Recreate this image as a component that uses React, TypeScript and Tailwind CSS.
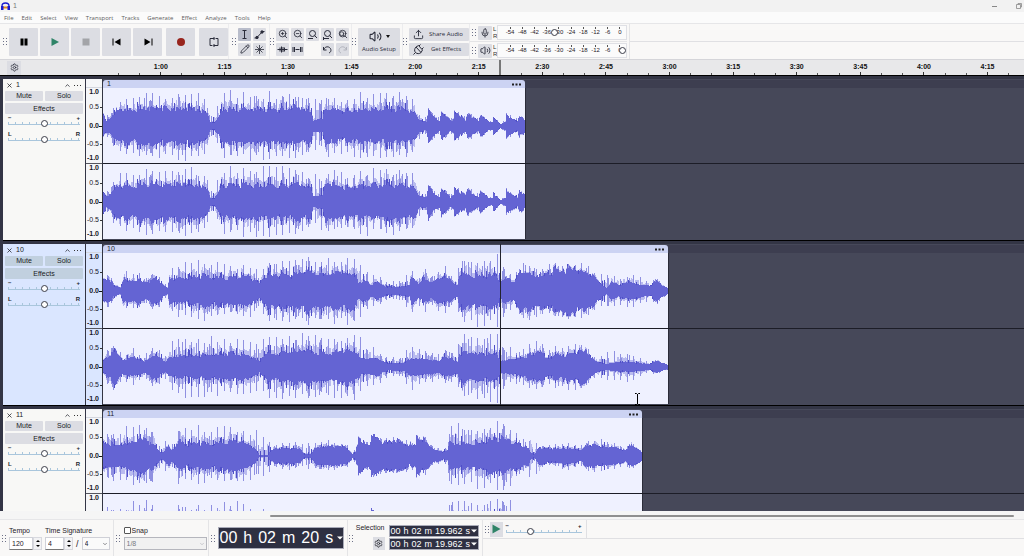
import type { ReactNode } from 'react';
import { ChevronDown, ChevronUp, Mic, Pencil, Search, Settings, Upload, Volume2, X, ZoomIn, ZoomOut } from 'lucide-react';

const PX_PER_SECOND = 4.24;
const RULER_LABELS = [
  '1:00', '1:15', '1:30', '1:45', '2:00', '2:15', '2:30', '2:45', '3:00', '3:15', '3:30', '3:45', '4:00', '4:15',
];
const MENUS = ['File', 'Edit', 'Select', 'View', 'Transport', 'Tracks', 'Generate', 'Effect', 'Analyze', 'Tools', 'Help'];
const DB_MARKS = ['-54', '-48', '-42', '-36', '-30', '-24', '-18', '-12', '-6', '0'];

// x, body height, peak height
type Key = [number, number, number];

interface Track {
  name: string;
  seconds: number;
  selected?: boolean;
  short?: boolean;
  channels: [Key[], Key[]];
}

const TRACK_1: Key[] = [
  [0, 11, 14], [3, 6, 10], [8, 9, 18], [11, 13, 26], [13, 18, 29], [30, 17, 31], [45, 20, 36], [62, 18, 32], [80, 19, 37],
  [98, 17, 33], [104, 13, 30], [107, 4, 10], [111, 4, 20], [115, 9, 24], [118, 18, 36], [150, 18, 37], [180, 17, 36],
  [196, 20, 34], [207, 15, 30], [210, 6, 30], [219, 7, 30], [222, 20, 34], [240, 16, 30], [260, 17, 36], [285, 18, 35],
  [300, 18, 34], [312, 14, 34], [316, 6, 14], [323, 5, 9], [325, 17, 18], [332, 8, 12], [336, 5, 8], [338, 14, 17],
  [347, 5, 8], [350, 6, 9], [351, 15, 18], [362, 6, 9], [364, 13, 16], [375, 5, 8], [377, 11, 13], [386, 4, 5],
  [389, 4, 5], [390, 9, 10], [397, 2, 3], [402, 4, 6], [403, 12, 14], [414, 5, 7], [416, 11, 13], [422, 6, 7],
];

const TRACK_2_LEFT: Key[] = [
  [0, 12, 15], [6, 13, 20], [10, 6, 9], [17, 3, 5], [20, 12, 22], [28, 11, 17], [34, 13, 20], [42, 8, 14], [50, 13, 20],
  [55, 13, 19], [60, 6, 9], [64, 3, 6], [66, 14, 24], [80, 13, 29], [100, 16, 32], [127, 14, 27], [145, 16, 32],
  [156, 8, 18], [163, 17, 33], [185, 17, 33], [205, 21, 36], [220, 18, 34], [240, 19, 36], [253, 18, 34], [255, 8, 34],
  [262, 11, 22], [268, 6, 14], [273, 9, 20], [282, 5, 10], [295, 4, 11], [306, 6, 20], [308, 15, 26], [315, 7, 14],
  [320, 13, 24], [328, 8, 17], [342, 15, 25], [350, 8, 14], [354, 6, 12], [356, 18, 37], [370, 17, 37], [385, 17, 37],
  [394, 17, 37], [397, 8, 34], [402, 14, 26], [411, 10, 17], [418, 21, 30], [430, 18, 29], [440, 16, 25], [450, 21, 28],
  [467, 24, 29], [478, 20, 28], [487, 18, 26], [495, 10, 14], [503, 3, 24], [508, 9, 18], [515, 6, 15], [525, 9, 18],
  [540, 6, 14], [548, 5, 8], [553, 12, 15], [558, 6, 8], [565, 3, 3],
];

const TRACK_2_RIGHT: Key[] = [
  [0, 7, 12], [6, 12, 22], [12, 17, 24], [19, 7, 15], [30, 10, 19], [41, 6, 12], [52, 13, 24], [62, 5, 14], [66, 10, 28],
  [85, 12, 33], [105, 13, 33], [127, 14, 29], [145, 13, 30], [156, 6, 28], [163, 14, 34], [190, 16, 34], [205, 18, 36],
  [222, 14, 33], [240, 17, 35], [253, 16, 34], [257, 8, 34], [264, 8, 22], [273, 9, 20], [284, 4, 11], [300, 4, 12],
  [308, 9, 28], [320, 8, 18], [335, 6, 14], [343, 11, 20], [354, 6, 14], [356, 16, 37], [375, 14, 36], [394, 14, 37],
  [397, 6, 30], [410, 8, 18], [420, 10, 20], [435, 17, 28], [444, 9, 17], [454, 13, 23], [466, 13, 24], [482, 18, 22],
  [492, 6, 10], [503, 3, 18], [515, 5, 16], [530, 5, 16], [545, 3, 5], [553, 6, 8], [565, 2, 2],
];

const TRACK_3: Key[] = [
  [0, 14, 28], [14, 11, 28], [22, 13, 30], [32, 17, 32], [42, 18, 34], [50, 12, 29], [57, 4, 10], [60, 4, 16],
  [65, 11, 16], [68, 6, 11], [72, 9, 22], [76, 16, 31], [84, 12, 27], [95, 14, 31], [105, 13, 27], [120, 15, 31],
  [135, 16, 32], [145, 12, 29], [152, 7, 26], [156, 1, 28], [164, 1, 28], [168, 6, 11], [178, 8, 14], [192, 8, 15],
  [197, 7, 13], [201, 2, 14], [207, 2, 15], [212, 9, 15], [225, 10, 16], [243, 9, 13], [249, 2, 3], [252, 4, 8],
  [255, 17, 19], [265, 11, 14], [268, 21, 22], [280, 15, 18], [292, 16, 19], [305, 12, 16], [312, 11, 14], [313, 20, 22],
  [322, 15, 19], [330, 6, 9], [340, 4, 8], [344, 5, 9], [346, 13, 37], [362, 13, 35], [375, 14, 34], [385, 17, 33],
  [400, 19, 37], [408, 15, 32], [416, 12, 22], [425, 9, 12], [427, 4, 32], [431, 2, 6], [435, 8, 34], [437, 8, 12],
  [450, 7, 11], [462, 8, 16], [478, 6, 11], [484, 12, 16], [500, 10, 18], [515, 8, 12], [522, 6, 9], [527, 11, 15],
  [535, 7, 8], [539, 4, 4],
];

const TRACKS: Track[] = [
  { name: '1', seconds: 99.53, channels: [TRACK_1, TRACK_1] },
  { name: '10', seconds: 133.26, selected: true, channels: [TRACK_2_LEFT, TRACK_2_RIGHT] },
  { name: '11', seconds: 127.13, short: true, channels: [TRACK_3, TRACK_3] },
];

function noise(n: number) {
  const value = Math.sin(n * 127.1 + 311.7) * 43758.5453;
  return value - Math.floor(value);
}

function levelAt(keys: Key[], x: number) {
  const next = keys.findIndex((key) => key[0] > x);
  if (next <= 0) return { body: keys[keys.length - 1][1], peak: keys[keys.length - 1][2] };
  const [x0, b0, p0] = keys[next - 1];
  const [x1, b1, p1] = keys[next];
  const t = (x - x0) / (x1 - x0);
  return { body: b0 + (b1 - b0) * t, peak: p0 + (p1 - p0) * t };
}

function buildWave(keys: Key[], width: number, seed: number) {
  let body = '';
  let soft = '';
  let faint = '';
  let dark = '';
  for (let x = 0; x < width; x++) {
    const { body: level, peak } = levelAt(keys, x);
    const pulse = level > 10 ? 1.06 - (((x + 5) % 13) / 13) * 0.22 : 1;
    const roughUp = 0.84 + noise(Math.floor(x / 2) + seed) * 0.2 + noise(x + seed) * 0.12;
    const roughDown = 0.8 + noise(Math.floor(x / 3) + seed + 900) * 0.22 + noise(x + seed + 300) * 0.14;
    const up = Math.max(1, Math.round(level * pulse * roughUp));
    const down = Math.max(1, Math.round(level * pulse * roughDown));
    body += `M${x} ${38 - up}h1v${up + down}h-1z`;

    const fuzz = (peak - level) * 0.45;
    const fuzzUp = Math.round(up + fuzz * noise(Math.floor(x / 2) * 3 + seed));
    const fuzzDown = Math.round(down + fuzz * noise(Math.floor(x / 2) * 5 + seed));
    faint += `M${x} ${38 - fuzzUp}h1v${fuzzUp + fuzzDown}h-1z`;

    const hit = noise(x * 7 + 31);
    const onBeat = x % 13 === 4 || x % 13 === 10;
    if (onBeat || hit > 0.84) {
      const reach = onBeat ? 0.55 : 0.25;
      const top = Math.min(37, Math.round(up + (peak - up) * (reach + 0.45 * noise(x + seed + 50))));
      const bottom = Math.min(36, Math.round(down + (peak - down) * (reach + 0.4 * noise(x + seed + 70))));
      soft += `M${x} ${38 - Math.max(top, up)}h1v${Math.max(top, up) + Math.max(bottom, down)}h-1z`;
    }
    if (hit > 0.62 && hit < 0.76) {
      const extra = Math.round((peak - level) * 0.4 * noise(x + 12));
      dark += `M${x} ${38 - up - extra}h1v${extra + 1}h-1zM${x} ${37 + down}h1v${extra + 1}h-1z`;
    }
  }
  return { body, soft, faint, dark };
}

function Waveform({ keys, width, seed }: { keys: Key[]; width: number; seed: number }) {
  const wave = buildWave(keys, width, seed);
  return (
    <svg width={width} height={75} viewBox={`0 0 ${width} 75`} shapeRendering="crispEdges" className="block" aria-hidden="true">
      <path d={wave.faint} fill="#b9bbef" />
      <path d={wave.soft} fill="#8f90e1" />
      <path d={wave.body} fill="#6464d3" />
      <path d={wave.dark} fill="#4f4fc8" />
    </svg>
  );
}

function Grip() {
  return (
    <span className="grid shrink-0 grid-cols-2 gap-0.5 self-center" aria-hidden="true">
      {[0, 1, 2, 3, 4, 5].map((dot) => (
        <span key={dot} className="size-px bg-[#6d7188]" />
      ))}
    </span>
  );
}

function BigButton({ label, children }: { label: string; children: ReactNode }) {
  return (
    <button type="button" aria-label={label} className="flex h-7 w-[29px] items-center justify-center rounded-[1px] bg-[#dcdde3]">
      <svg width="12" height="12" viewBox="0 0 12 12">{children}</svg>
    </button>
  );
}

function SmallButton({ label, active, children }: { label: string; active?: boolean; children: ReactNode }) {
  return (
    <button
      type="button"
      aria-label={label}
      className={`flex h-[13px] w-[13px] items-center justify-center rounded-[1px] text-[#2a2c3a] ${active ? 'bg-[#b9bdcb]' : 'bg-[#dcdde3]'}`}
    >
      {children}
    </button>
  );
}

function Glyph({ children }: { children: ReactNode }) {
  return (
    <svg width="11" height="11" viewBox="0 0 11 11" fill="none" stroke="currentColor" strokeWidth="1">
      {children}
    </svg>
  );
}

const THUMB =
  '[&::-webkit-slider-thumb]:size-[7px] [&::-webkit-slider-thumb]:appearance-none [&::-webkit-slider-thumb]:rounded-full [&::-webkit-slider-thumb]:border [&::-webkit-slider-thumb]:border-[#3a3c48] [&::-webkit-slider-thumb]:bg-white';

function LineSlider({ label, from, to, value = 50 }: { label: string; from: string; to: string; value?: number }) {
  return (
    <label className="block h-4">
      <span className="flex h-1.5 justify-between text-[6px] leading-[6px] font-bold text-[#22242e]">
        <span>{from}</span>
        <span>{to}</span>
      </span>
      <input
        type="range"
        aria-label={label}
        defaultValue={value}
        className={`-mt-px block h-[7px] w-full appearance-none bg-[linear-gradient(#a9c6dc,#a9c6dc),repeating-linear-gradient(90deg,#a9c6dc_0_1px,transparent_1px_7px)] bg-[length:100%_1px,100%_2px] bg-[position:0_4px,0_2px] bg-no-repeat ${THUMB}`}
      />
    </label>
  );
}

function Meter({ label, value, children }: { label: string; value: number; children: ReactNode }) {
  return (
    <div className="flex h-[18px] items-center gap-0.5 border-b border-[#e4e4e6] pl-0.5">
      <Grip />
      <button type="button" aria-label={label} className="flex h-[14px] w-[14px] items-center justify-center rounded-[1px] bg-[#dcdde3] text-[#2a2c3a]">
        {children}
      </button>
      <span className="-ml-px w-1 text-[6px] leading-[7px] text-[#333]">
        L<br />R
      </span>
      <div className="relative -ml-0.5 h-[15px] w-[130px] border border-[#dfe0e5] bg-[#fbfbfb] pt-px pl-1.5">
        <div className="flex">
          {DB_MARKS.map((mark) => (
            <span key={mark} className="flex flex-1 flex-col items-center text-[6px] leading-[7px] text-[#1f2028]">
              <span className="h-0.5 w-px bg-[#555]" />
              {mark}
            </span>
          ))}
        </div>
        <input
          type="range"
          aria-label={`${label} level`}
          defaultValue={value}
          className={`absolute inset-x-0 top-[3px] h-[7px] w-full appearance-none bg-transparent ${THUMB}`}
        />
      </div>
    </div>
  );
}

function TopToolbar() {
  return (
    <div className="flex h-9 shrink-0 items-stretch border-t border-[#e6e6e8] bg-[#f9f8f7]">
      <div className="flex items-center gap-0.5 border-r border-[#ececee] pl-[3px]">
        <Grip />
        <BigButton label="Pause"><path d="M2.5 2.5h3v7h-3zM6.5 2.5h3v7h-3z" fill="#000" /></BigButton>
        <BigButton label="Play"><path d="M2.5 2l7.5 4-7.500 4z" fill="#2f8468" /></BigButton>
        <BigButton label="Stop"><path d="M2.500 2.500h7v7h-7z" fill="#a3a4a8" /></BigButton>
        <BigButton label="Skip to start"><path d="M1.500 2.500h1v7h-1zM9.500 2.500v7L3.500 6z" fill="#000" /></BigButton>
        <BigButton label="Skip to end"><path d="M9.500 2.500h1v7h-1zM2.500 2.500v7l6-3.500z" fill="#000" /></BigButton>
        <span />
        <BigButton label="Record"><circle cx="6" cy="6" r="4" fill="#98251d" /></BigButton>
        <span />
        <BigButton label="Loop">
          <path d="M4 9.500H2v-7h4.500M8 2.500h2v7H5.500M5.500 1l1.500 1.500L5.500 4M6.500 8L5 9.500 6.500 11" fill="none" stroke="#2a2c3a" strokeWidth="1" />
        </BigButton>
      </div>

      <div className="flex items-center gap-0.5 border-r border-[#ececee] pr-[3px] pl-[3px]">
        <Grip />
        <div className="grid grid-cols-2 gap-0.5">
          <SmallButton label="Selection tool" active><Glyph><path d="M3.500 1.500h4M3.500 9.500h4M5.500 1.500v8" /></Glyph></SmallButton>
          <SmallButton label="Envelope tool">
            <Glyph><path d="M.5 9h2l6-6.500h2" /><circle cx="3" cy="8.500" r="1.200" fill="currentColor" /><circle cx="8" cy="3" r="1.200" fill="currentColor" /></Glyph>
          </SmallButton>
          <SmallButton label="Draw tool"><Pencil size={10} strokeWidth={2} /></SmallButton>
          <SmallButton label="Multi tool"><Glyph><path d="M5.500 1v9M1 5.500h9M2.500 2.500l6 6M8.500 2.500l-6 6" strokeWidth="0.8" /></Glyph></SmallButton>
        </div>
      </div>

      <div className="flex items-center gap-0.5 border-r border-[#ececee] pr-0.5">
        <Grip />
        <div className="grid grid-cols-5 gap-0.5">
          <SmallButton label="Zoom in"><ZoomIn size={10} strokeWidth={2} /></SmallButton>
          <SmallButton label="Zoom out"><ZoomOut size={10} strokeWidth={2} /></SmallButton>
          <SmallButton label="Fit selection to width"><Glyph><circle cx="5.500" cy="4.500" r="3" /><path d="M7.500 6.500L10 9M1 9.500h5" /></Glyph></SmallButton>
          <SmallButton label="Fit project to width"><Glyph><circle cx="5.500" cy="4.500" r="3" /><path d="M7.500 6.500L10 9M1 9.500h6M1.500 8v3" /></Glyph></SmallButton>
          <SmallButton label="Zoom toggle"><span className="relative"><Search size={10} strokeWidth={2} /><Search size={6} strokeWidth={3} className="absolute top-0.5 left-px" /></span></SmallButton>
          <SmallButton label="Trim audio outside selection"><Glyph><path d="M0.500 5.500h10M3 3.500v4M4.500 2.500v6M6 3v5M7.500 3.500v4" /></Glyph></SmallButton>
          <SmallButton label="Silence audio selection"><Glyph><path d="M1 3v5M2.500 3v5M3.500 5.500h4M8.500 3v5M10 3v5" /></Glyph></SmallButton>
          <span />
          <SmallButton label="Undo"><Glyph><path d="M1.500 3v3h3M1.500 6c1-3 4-4 6-2.500s2 4.500-.5 5.500" /></Glyph></SmallButton>
          <SmallButton label="Redo"><span className="text-[#b2b4bd]"><Glyph><path d="M9.500 3v3h-3M9.500 6c-1-3-4-4-6-2.500s-2 4.500.5 5.500" /></Glyph></span></SmallButton>
        </div>
      </div>

      <div className="flex items-center gap-0.5 border-r border-[#ececee] pr-0.5">
        <Grip />
        <button type="button" className="flex h-7 w-[42px] flex-col items-center justify-center gap-0.5 rounded-[1px] bg-[#dcdde3] font-['Open_Sans',sans-serif] text-[6px] leading-2 font-medium text-[#2a2c3a]">
          <span className="flex items-center gap-1">
            <Volume2 size={13} strokeWidth={2} />
            <svg width="4" height="3" viewBox="0 0 4 3"><path d="M0 0h4L2 3z" fill="#111" /></svg>
          </span>
          Audio Setup
        </button>
      </div>

      <div className="flex items-center gap-0.5 border-r border-[#ececee]">
        <Grip />
        <div className="flex flex-col gap-0.5 font-['Open_Sans',sans-serif] text-[6px] font-medium text-[#2a2c3a]">
          <button type="button" className="flex h-[13px] w-[60px] items-center gap-[5px] rounded-[1px] bg-[#dcdde3] pl-1">
            <Upload size={11} strokeWidth={2} />
            Share Audio
          </button>
          <button type="button" className="flex h-[13px] w-[60px] items-center gap-[7px] rounded-[1px] bg-[#dcdde3] pl-1">
            <svg width="11" height="11" viewBox="0 0 11 11" fill="none" stroke="currentColor" strokeWidth="1">
              <path d="M.5 10.500l2-2M3 3l5 5.500c-1.500 1.500-4 1.500-5.500 0S1.500 4.500 3 3zM3 3l2.500-1.500L9.500 6 8 8.500M6 2L7.500.5M9 5l1.500-1.500" />
            </svg>
            Get Effects
          </button>
        </div>
      </div>

      <div className="border-r border-[#e4e4e6] pr-0.5">
        <Meter label="Record meter" value={44}><Mic size={10} strokeWidth={2} /></Meter>
        <Meter label="Playback meter" value={100}><Volume2 size={11} strokeWidth={2} /></Meter>
      </div>
      <div className="h-[18px] flex-1 border-b border-[#e0e0e3]" />
    </div>
  );
}

function Timeline() {
  const cell = { width: 15 * PX_PER_SECOND };
  return (
    <div className="relative flex h-4 shrink-0 overflow-hidden border-t border-[#d5d5d9] bg-[#e8e8ea]">
      <div className="flex w-[108px] shrink-0 items-center pl-[7px]">
        <button type="button" aria-label="Timeline options" className="flex h-[14px] w-[14px] items-center justify-center bg-[#dcdde3] text-[#2a2c3a]">
          <Settings size={9} strokeWidth={2} />
        </button>
      </div>
      <div className="flex w-[21px] shrink-0 items-end justify-center"><span className="h-0.5 w-px bg-[#555]" /></div>
      {RULER_LABELS.map((label) => (
        <div key={label} style={cell} className="flex shrink-0 flex-col justify-between pt-0.5 text-center text-[7px] leading-[9px] font-bold text-[#111]">
          {label}
          <span className="grid grid-cols-3 items-end justify-items-center">
            <span className="h-0.5 w-px bg-[#555]" />
            <span className="h-[3px] w-px bg-[#333]" />
            <span className="h-0.5 w-px bg-[#555]" />
          </span>
        </div>
      ))}
      <span className="absolute inset-y-0 left-[499px] w-0.5 bg-[#777]" />
    </div>
  );
}

function TrackPanel({ track }: { track: Track }) {
  const button = track.selected ? 'bg-[#c1d0df]' : 'bg-[#dcdde3]';
  return (
    <div className={`w-[82px] shrink-0 px-0.5 text-[7px] text-[#1a1b24] ${track.selected ? 'bg-[#dae6ff]' : 'bg-[#f8f8f6]'}`}>
      <div className="flex h-3 items-center gap-[3px] pr-0.5 pl-px">
        <button type="button" aria-label="Close track"><X size={7} strokeWidth={2.5} /></button>
        <span className="flex-1">{track.name}</span>
        <button type="button" aria-label="Collapse track"><ChevronUp size={7} strokeWidth={2.5} /></button>
        <button type="button" aria-label="Track menu">
          <svg width="7" height="3" viewBox="0 0 7 3"><path d="M0 1h1v1H0zM3 1h1v1H3zM6 1h1v1H6z" fill="#333" /></svg>
        </button>
      </div>
      <div className="grid grid-cols-2 gap-0.5 pb-px leading-[10px]">
        <button type="button" className={`rounded-[1px] ${button}`}>Mute</button>
        <button type="button" className={`rounded-[1px] ${button}`}>Solo</button>
        <button type="button" className={`col-span-2 rounded-[1px] leading-[11px] ${button}`}>Effects</button>
      </div>
      <div className="px-[3px]">
        <LineSlider label={`Gain ${track.name}`} from="−" to="+" />
        <LineSlider label={`Pan ${track.name}`} from="L" to="R" />
      </div>
    </div>
  );
}

function AmplitudeScale({ topOnly }: { topOnly?: boolean }) {
  return (
    <div className="grid h-[75px] grid-rows-[8px_22px_16px_20px_8px] items-center text-right text-[7px] leading-2 text-[#16171f]">
      <b>1.0<i className="inline-block w-[3px]" /></b>
      {!topOnly && (
        <>
          <span>0.5<i className="ml-px inline-block h-px w-0.5 bg-[#333] align-middle" /></span>
          <b>0.0<i className="inline-block h-px w-[3px] bg-[#111] align-middle" /></b>
          <span>-0.5<i className="ml-px inline-block h-px w-0.5 bg-[#333] align-middle" /></span>
          <b>-1.0<i className="inline-block w-[3px]" /></b>
        </>
      )}
    </div>
  );
}

function TrackRow({ track }: { track: Track }) {
  const width = Math.round(track.seconds * PX_PER_SECOND);
  return (
    <section className="flex h-[162px] shrink-0 border-b border-black">
      <TrackPanel track={track} />
      <div className={`ml-px w-[17px] shrink-0 border-r border-[#333543] ${track.selected ? 'bg-[#dae6ff]' : 'bg-[#f5f6f8]'}`}>
        <div className="h-[9px] border-b border-[#d3d6de]" />
        <AmplitudeScale />
        <div className="h-px bg-[#55565f]" />
        <AmplitudeScale topOnly={track.short} />
      </div>
      <div className="relative min-w-0 flex-1 overflow-hidden bg-[#464859]">
        <div className="mt-px flex h-2 bg-[#3d3e50]">
          <div style={{ width }} className="flex items-center justify-between rounded-t-[3px] bg-[#ccd3f3] px-1 text-[7px] leading-2 text-[#22242e]">
            {track.name}
            <svg width="9" height="3" viewBox="0 0 9 3"><path d="M0 .5h2v2H0zM3.500 .5h2v2h-2zM7 .5h2v2H7z" fill="#222" /></svg>
          </div>
        </div>
        {track.channels.map((keys, index) => (
          <div key={index} className={index === 0 ? 'border-b border-[#1c1d27]' : ''}>
            <div style={{ width: width + 1 }} className="h-[75px] border-r border-[#2b2c39] bg-[#eff1ff]">
              <Waveform keys={keys} width={width} seed={track.name.length * 100 + index * 37} />
            </div>
          </div>
        ))}
        {track.selected && <span className="absolute inset-y-0 left-[397px] w-px bg-[#22232e]" />}
        {track.selected && (
          <svg width="7" height="12" viewBox="0 0 7 12" className="absolute top-[149px] left-[531px]" fill="none" stroke="#000">
            <path d="M1 .5h1.500l1 1 1-1H6M3.500 1v10M1 11.500h1.500l1-1 1 1H6" />
          </svg>
        )}
      </div>
    </section>
  );
}

function Stepper({ label, value, width }: { label: string; value: string; width: string }) {
  return (
    <span className="flex">
      <input aria-label={label} defaultValue={value} className={`h-[13px] border border-[#d0d1d8] border-b-[#777] bg-white pl-0.5 text-[7px] ${width}`} />
      <span className="flex w-[9px] flex-col border border-[#d8d9df] bg-[#f2f2f4]">
        <button type="button" aria-label={`Increase ${label}`} className="flex flex-1 items-center justify-center">
          <svg width="4" height="2" viewBox="0 0 4 2"><path d="M0 2h4L2 0z" /></svg>
        </button>
        <button type="button" aria-label={`Decrease ${label}`} className="flex flex-1 items-center justify-center">
          <svg width="4" height="2" viewBox="0 0 4 2"><path d="M0 0h4L2 2z" /></svg>
        </button>
      </span>
    </span>
  );
}

function TimeReadout({ parts, large }: { parts: string[]; large?: boolean }) {
  return (
    <div
      className={`flex items-center border border-[#a9abb8] bg-[#2e3042] text-white ${large ? 'h-[22px] w-[126px] gap-1.5 pl-px text-[16px] leading-5' : 'h-3 w-[90px] gap-[3px] pl-px text-[9px] leading-[10px]'}`}
    >
      {parts.map((part, index) => (
        <span key={index}>{part}</span>
      ))}
      <button type="button" aria-label="Time format" className="-ml-0.5">
        <svg width="6" height="4" viewBox="0 0 6 4"><path d="M0 .5h6L3 3.500z" fill="#fff" /></svg>
      </button>
    </div>
  );
}

function BottomToolbar() {
  return (
    <div className="flex h-9 shrink-0 items-stretch bg-[#f9f8f7] text-[7px] leading-2 text-[#1f2028]">
      <div className="flex gap-[3px] border-r border-[#e4e4e6] pr-[3px] pl-0.5">
        <Grip />
        <div className="flex w-[33px] flex-col gap-0.5 pt-[7px]">
          <span>Tempo</span>
          <Stepper label="Tempo" value="120" width="w-6" />
        </div>
        <div className="flex flex-col gap-0.5 pt-[7px]">
          <span>Time Signature</span>
          <span className="flex items-center gap-[3px]">
            <Stepper label="Beats" value="4" width="w-[19px]" />
            <span className="text-[9px]">/</span>
            <span className="relative flex items-center">
              <select aria-label="Beat unit" className="h-[13px] w-7 appearance-none border border-[#cfd0d7] bg-[#fafafa] pl-0.5" defaultValue="4">
                <option>4</option>
              </select>
              <ChevronDown size={6} strokeWidth={2} className="pointer-events-none absolute right-0.5" />
            </span>
          </span>
        </div>
      </div>
      <div className="flex gap-1 border-r border-[#e4e4e6] pr-px pl-0.5">
        <Grip />
        <div className="flex flex-col gap-0.5 pt-[6px]">
          <label className="flex h-[9px] items-center gap-px">
            <input type="checkbox" className="size-[7px] appearance-none rounded-[1px] border border-[#555] bg-white" />
            Snap
          </label>
          <span className="relative flex items-center text-[#a0a1a8]">
            <select aria-label="Snap to" disabled className="h-[13px] w-[83px] appearance-none border border-[#b5b6bd] bg-[#f1f1f1] pl-0.5 text-[#77787f] opacity-100" defaultValue="1/8">
              <option>1/8</option>
            </select>
            <ChevronDown size={6} strokeWidth={2} className="pointer-events-none absolute right-0.5" />
          </span>
        </div>
      </div>
      <div className="flex items-center gap-[3px] border-r border-[#e4e4e6] pr-[3px] pl-0.5">
        <Grip />
        <TimeReadout parts={['00', 'h', '02', 'm', '20', 's']} large />
      </div>
      <div className="flex gap-1 border-r border-[#e4e4e6] pr-[3px] pl-px">
        <Grip />
        <div className="flex w-7 flex-col items-end gap-[5px] pt-1">
          <span>Selection</span>
          <button type="button" aria-label="Selection options" className="flex h-[13px] w-3 items-center justify-center bg-[#dcdde3]">
            <Settings size={9} strokeWidth={2} />
          </button>
        </div>
        <div className="flex flex-col justify-center gap-px pb-0.5">
          <TimeReadout parts={['00', 'h', '02', 'm', '19.962', 's']} />
          <TimeReadout parts={['00', 'h', '02', 'm', '19.962', 's']} />
        </div>
      </div>
      <div className="flex h-[19px] items-center gap-px border-r border-b border-[#e0e0e3] pr-1 pl-0.5">
        <Grip />
        <button type="button" aria-label="Play at speed" className="flex h-[15px] w-[13px] items-center justify-center bg-[#dcdde3]">
          <svg width="9" height="10" viewBox="0 0 9 10"><path d="M.5.5l8 4.500-8 4.500z" fill="#2f8468" /></svg>
        </button>
        <div className="w-[78px] pt-1 pl-0.5"><LineSlider label="Playback speed" from="−" to="+" value={31} /></div>
      </div>
      <div className="h-[19px] flex-1 border-b border-[#e0e0e3]" />
    </div>
  );
}

export default function App() {
  return (
    <div className="flex h-screen flex-col overflow-hidden bg-[#f9f8f7] font-['Liberation_Sans',Arial,sans-serif]">
      <header className="flex h-3 shrink-0 items-center bg-[#f2f2f2] text-[7px] text-[#777]">
        <svg width="9" height="8" viewBox="0 0 9 8" className="mr-[3px] ml-px">
          <path d="M2 4.500h5v2H2z" fill="#e88a1c" />
          <path d="M1 5V4a3.500 3 0 0 1 7 0v1" fill="none" stroke="#1a1ad0" strokeWidth="1.300" />
          <path d="M0 4h2.500v4H0zM6.500 4H9v4H6.500z" fill="#1a1ad0" />
        </svg>
        <span className="flex-1">1</span>
        <button type="button" aria-label="Minimize" className="mr-[19px] h-px w-[5px] bg-[#888]" />
        <button type="button" aria-label="Restore" className="mr-0.5">
          <svg width="6" height="6" viewBox="0 0 6 6" fill="none" stroke="#888" strokeWidth="0.8"><path d="M.5 1.500h4v4h-4zM2 1.500V.5h3.500V4H4.500" /></svg>
        </button>
      </header>
      <nav className="flex h-[11px] shrink-0 items-center gap-2 bg-[#fbfbfb] pt-px pl-1 font-['Open_Sans',sans-serif] text-[6px] text-[#5d5d5d]">
        {MENUS.map((menu) => (
          <button key={menu} type="button">{menu}</button>
        ))}
      </nav>
      <TopToolbar />
      <Timeline />
      <main className="flex min-h-0 flex-1 flex-col gap-[3px] overflow-hidden border-t border-black bg-[#333545] pt-[3px] pl-[3px]">
        {TRACKS.map((track) => (
          <TrackRow key={track.name} track={track} />
        ))}
      </main>
      <div className="h-[9px] shrink-0 border-b border-[#e6e6e8] bg-[#f5f5f5] pt-1 pr-2.5 pl-[270px]">
        <div className="h-0.5 rounded-full bg-[#8f8f8f]" />
      </div>
      <BottomToolbar />
    </div>
  );
}
